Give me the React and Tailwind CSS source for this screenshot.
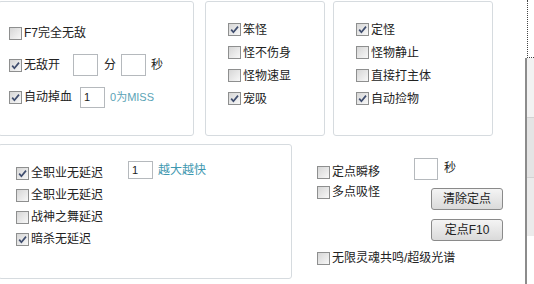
function Box({ on }) {
  return (
    <span className="w-[13px] h-[13px] shrink-0 border border-[#8e8f8f] bg-gradient-to-br from-[#d6d6d6] to-[#f8f8f8] flex items-center justify-center">
      {on && (
        <svg width="11" height="11" viewBox="0 0 11 11">
          <path d="M2.2 5.6 L4.4 8.2 L9 2.6" fill="none" stroke="#3f4d6e" strokeWidth="1.7" />
        </svg>
      )}
    </span>
  );
}

function Check({ on, label, className = "" }) {
  return (
    <div className={"flex items-center gap-[2px] whitespace-nowrap " + className}>
      <Box on={on} />
      <span>{label}</span>
    </div>
  );
}

function Field({ value = "", className = "" }) {
  return (
    <div className={"border border-[#b5b9bd] bg-white text-[11px] pl-[3px] flex items-center shrink-0 " + className}>
      {value}
    </div>
  );
}

function Btn({ children }) {
  return (
    <div className="w-[72px] h-[22px] ml-[17px] rounded-[3px] border border-[#8a8a8a] bg-gradient-to-b from-[#f4f4f4] to-[#dadada] flex items-center justify-center">
      {children}
    </div>
  );
}

export default function App() {
  return (
    <div className="w-[534px] h-[284px] bg-white overflow-hidden flex font-['Liberation_Sans','Noto_Sans_CJK_SC',sans-serif] text-[12px] text-[#222]">
      <div className="w-[525px] shrink-0 flex flex-col">
        {/* top row */}
        <div className="flex pt-[1px] h-[136px]">
          <div className="ml-[-2px] w-[196px] h-[135px] border border-[#d6dbdf] rounded-[3px] pt-[19px] pl-[10px] flex flex-col gap-[8px]">
            <div className="h-[24px] flex items-center">
              <Check label="F7完全无敌" />
            </div>
            <div className="h-[24px] flex items-center">
              <Check on label="无敌开" />
              <Field className="ml-[13px] w-[25px] h-[22px]" />
              <span className="ml-[6px]">分</span>
              <Field className="ml-[5px] w-[25px] h-[22px]" />
              <span className="ml-[5px]">秒</span>
            </div>
            <div className="h-[24px] flex items-center">
              <Check on label="自动掉血" />
              <Field value="1" className="ml-[8px] w-[25px] h-[21px]" />
              <span className="ml-[5px] text-[11px] text-[#5ba3b6]">0为MISS</span>
            </div>
          </div>

          <div className="ml-[11px] w-[120px] h-[135px] border border-[#d6dbdf] rounded-[3px] pt-[16px] pl-[22px] flex flex-col">
            <Check on label="笨怪" className="h-[23px]" />
            <Check label="怪不伤身" className="h-[23px]" />
            <Check label="怪物速显" className="h-[23px]" />
            <Check on label="宠吸" className="h-[23px]" />
          </div>

          <div className="ml-[8px] w-[160px] h-[135px] border border-[#d6dbdf] rounded-[3px] pt-[16px] pl-[22px] flex flex-col">
            <Check on label="定怪" className="h-[23px]" />
            <Check label="怪物静止" className="h-[23px]" />
            <Check label="直接打主体" className="h-[23px]" />
            <Check on label="自动捡物" className="h-[23px]" />
          </div>
        </div>

        {/* bottom row */}
        <div className="flex mt-[8px]">
          <div className="ml-[-2px] w-[294px] h-[135px] border border-[#d6dbdf] rounded-[3px] pt-[17px] pl-[17px] flex items-start">
            <div className="w-[112px] flex flex-col">
              <Check on label="全职业无延迟" className="h-[22px]" />
              <Check label="全职业无延迟" className="h-[22px]" />
              <Check label="战神之舞延迟" className="h-[22px]" />
              <Check on label="暗杀无延迟" className="h-[22px]" />
            </div>
            <div className="flex items-center mt-[-1px]">
              <Field value="1" className="w-[25px] h-[18px]" />
              <span className="ml-[5px] text-[#3f98b0]">越大越快</span>
            </div>
          </div>

          <div className="ml-[25px] w-[97px] pt-[18px] flex flex-col">
            <Check label="定点瞬移" className="h-[20px]" />
            <Check label="多点吸怪" className="h-[20px]" />
            <Check label="无限灵魂共鸣/超级光谱" className="h-[20px] mt-[46px]" />
          </div>

          <div className="pt-[14px] flex flex-col">
            <div className="flex items-center">
              <Field className="w-[24px] h-[22px]" />
              <span className="ml-[6px] mt-[-3px]">秒</span>
            </div>
            <div className="mt-[8px]">
              <Btn>清除定点</Btn>
            </div>
            <div className="mt-[9px]">
              <Btn>定点F10</Btn>
            </div>
          </div>
        </div>
      </div>

      {/* right edge strip */}
      <div className="w-[9px] shrink-0 flex flex-col">
        <div className="h-[58px] ml-[2px] border-l border-b border-dotted border-[#444]" />
        <div className="flex-1 flex">
          <div className="w-[2px] bg-[#8c8c8c]" />
          <div className="flex-1 flex flex-col">
            <div className="h-[60px] bg-[#f2f2f2] border-b border-[#d2d2d2]" />
            <div className="h-[60px] bg-[#e4e4e4] border-b border-[#d2d2d2]" />
            <div className="h-[58px] bg-[#ebebeb]" />
          </div>
        </div>
      </div>
    </div>
  );
}
